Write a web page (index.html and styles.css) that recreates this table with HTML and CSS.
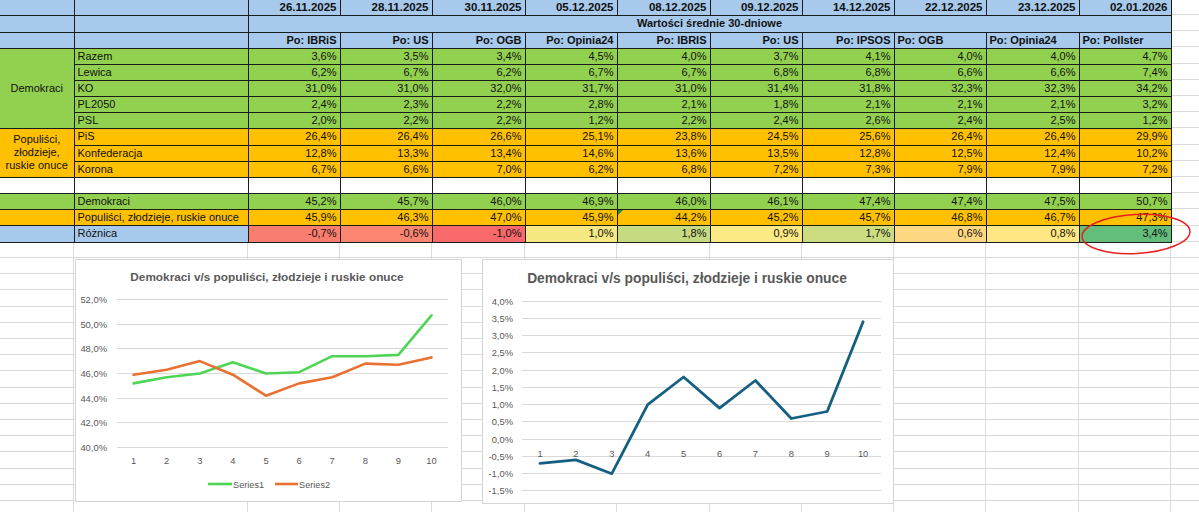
FILE: index.html
```html
<!DOCTYPE html>
<html lang="pl">
<head>
<meta charset="utf-8">
<title>Sondaże</title>
<link rel="stylesheet" href="styles.css">
</head>
<body>
<div class="sheet">
  <table class="poll">
    <colgroup>
      <col class="w-a"><col class="w-b">
      <col class="w92"><col class="w92"><col class="w93"><col class="w92"><col class="w93">
      <col class="w92"><col class="w92"><col class="w92"><col class="w93"><col class="w92">
    </colgroup>
    <tr class="h15">
      <td class="blue"></td><td class="blue"></td>
      <td class="blue date">26.11.2025</td><td class="blue date">28.11.2025</td><td class="blue date">30.11.2025</td>
      <td class="blue date">05.12.2025</td><td class="blue date">08.12.2025</td><td class="blue date">09.12.2025</td>
      <td class="blue date">14.12.2025</td><td class="blue date">22.12.2025</td><td class="blue date">23.12.2025</td>
      <td class="blue date">02.01.2026</td>
    </tr>
    <tr class="h17">
      <td class="blue"></td><td class="blue"></td>
      <td class="blue caption" colspan="10">Wartości średnie 30-dniowe</td>
    </tr>
    <tr class="h16">
      <td class="blue"></td><td class="blue"></td>
      <td class="blue src">Po: IBRiS</td><td class="blue src">Po: US</td><td class="blue src">Po: OGB</td>
      <td class="blue src">Po: Opinia24</td><td class="blue src">Po: IBRIS</td><td class="blue src">Po: US</td>
      <td class="blue src">Po: IPSOS</td><td class="blue src left">Po: OGB</td><td class="blue src left">Po: Opinia24</td>
      <td class="blue src left">Po: Pollster</td>
    </tr>
    <tr class="h16 green">
      <td class="group" rowspan="5">Demokraci</td><td class="name">Razem</td>
      <td class="num">3,6%</td><td class="num">3,5%</td><td class="num">3,4%</td><td class="num">4,5%</td><td class="num">4,0%</td>
      <td class="num">3,7%</td><td class="num">4,1%</td><td class="num">4,0%</td><td class="num">4,0%</td><td class="num">4,7%</td>
    </tr>
    <tr class="h16 green">
      <td class="name">Lewica</td>
      <td class="num">6,2%</td><td class="num">6,7%</td><td class="num">6,2%</td><td class="num">6,7%</td><td class="num">6,7%</td>
      <td class="num">6,8%</td><td class="num">6,8%</td><td class="num">6,6%</td><td class="num">6,6%</td><td class="num">7,4%</td>
    </tr>
    <tr class="h16 green">
      <td class="name">KO</td>
      <td class="num">31,0%</td><td class="num">31,0%</td><td class="num">32,0%</td><td class="num">31,7%</td><td class="num">31,0%</td>
      <td class="num">31,4%</td><td class="num">31,8%</td><td class="num">32,3%</td><td class="num">32,3%</td><td class="num">34,2%</td>
    </tr>
    <tr class="h16 green">
      <td class="name">PL2050</td>
      <td class="num">2,4%</td><td class="num">2,3%</td><td class="num">2,2%</td><td class="num">2,8%</td><td class="num">2,1%</td>
      <td class="num">1,8%</td><td class="num">2,1%</td><td class="num">2,1%</td><td class="num">2,1%</td><td class="num">3,2%</td>
    </tr>
    <tr class="h16 green">
      <td class="name">PSL</td>
      <td class="num">2,0%</td><td class="num">2,2%</td><td class="num">2,2%</td><td class="num">1,2%</td><td class="num">2,2%</td>
      <td class="num">2,4%</td><td class="num">2,6%</td><td class="num">2,4%</td><td class="num">2,5%</td><td class="num">1,2%</td>
    </tr>
    <tr class="h17 orange">
      <td class="group" rowspan="3">Populiści,<br>złodzieje,<br>ruskie onuce</td><td class="name">PiS</td>
      <td class="num">26,4%</td><td class="num">26,4%</td><td class="num">26,6%</td><td class="num">25,1%</td><td class="num">23,8%</td>
      <td class="num">24,5%</td><td class="num">25,6%</td><td class="num">26,4%</td><td class="num">26,4%</td><td class="num">29,9%</td>
    </tr>
    <tr class="h16 orange">
      <td class="name">Konfederacja</td>
      <td class="num">12,8%</td><td class="num">13,3%</td><td class="num">13,4%</td><td class="num">14,6%</td><td class="num">13,6%</td>
      <td class="num">13,5%</td><td class="num">12,8%</td><td class="num">12,5%</td><td class="num">12,4%</td><td class="num">10,2%</td>
    </tr>
    <tr class="h16 orange">
      <td class="name">Korona</td>
      <td class="num">6,7%</td><td class="num">6,6%</td><td class="num">7,0%</td><td class="num">6,2%</td><td class="num">6,8%</td>
      <td class="num">7,2%</td><td class="num">7,3%</td><td class="num">7,9%</td><td class="num">7,9%</td><td class="num">7,2%</td>
    </tr>
    <tr class="h16 blank">
      <td></td><td></td><td></td><td></td><td></td><td></td><td></td><td></td><td></td><td></td><td></td><td></td>
    </tr>
    <tr class="h16 green">
      <td></td><td class="name">Demokraci</td>
      <td class="num">45,2%</td><td class="num">45,7%</td><td class="num">46,0%</td><td class="num">46,9%</td><td class="num">46,0%</td>
      <td class="num">46,1%</td><td class="num">47,4%</td><td class="num">47,4%</td><td class="num">47,5%</td><td class="num">50,7%</td>
    </tr>
    <tr class="h16 orange">
      <td></td><td class="name">Populiści, złodzieje, ruskie onuce</td>
      <td class="num">45,9%</td><td class="num">46,3%</td><td class="num">47,0%</td><td class="num">45,9%</td><td class="num flag">44,2%</td>
      <td class="num">45,2%</td><td class="num">45,7%</td><td class="num">46,8%</td><td class="num">46,7%</td><td class="num">47,3%</td>
    </tr>
    <tr class="h17 diff">
      <td class="blue"></td><td class="blue name">Różnica</td>
      <td class="num" style="background:#f97e6f">-0,7%</td>
      <td class="num" style="background:#fa8570">-0,6%</td>
      <td class="num" style="background:#f8696b">-1,0%</td>
      <td class="num" style="background:#f6e883">1,0%</td>
      <td class="num" style="background:#c5da81">1,8%</td>
      <td class="num" style="background:#fcea84">0,9%</td>
      <td class="num" style="background:#cbdc81">1,7%</td>
      <td class="num" style="background:#fed981">0,6%</td>
      <td class="num" style="background:#ffe783">0,8%</td>
      <td class="num" style="background:#63be7b">3,4%</td>
    </tr>
  </table>

  <div class="charts">
    <div class="chart chart-one">
      <svg class="plot" viewBox="0 0 385 241" width="385" height="241">
        <text class="title title-sm" x="191" y="20.5">Demokraci v/s populiści, złodzieje i ruskie onuce</text>
        <g class="grid">
          <line x1="41" x2="372" y1="39.5" y2="39.5"/>
          <line x1="41" x2="372" y1="64.5" y2="64.5"/>
          <line x1="41" x2="372" y1="88.5" y2="88.5"/>
          <line x1="41" x2="372" y1="113.5" y2="113.5"/>
          <line x1="41" x2="372" y1="138.5" y2="138.5"/>
          <line x1="41" x2="372" y1="162.5" y2="162.5"/>
          <line x1="41" x2="372" y1="187.5" y2="187.5"/>
        </g>
        <g class="ylab">
          <text x="31" y="42.5">52,0%</text>
          <text x="31" y="67.5">50,0%</text>
          <text x="31" y="91.5">48,0%</text>
          <text x="31" y="116.5">46,0%</text>
          <text x="31" y="141.5">44,0%</text>
          <text x="31" y="165.5">42,0%</text>
          <text x="31" y="190.5">40,0%</text>
        </g>
        <g class="xlab">
          <text x="57.6" y="203.5">1</text>
          <text x="90.7" y="203.5">2</text>
          <text x="123.8" y="203.5">3</text>
          <text x="156.9" y="203.5">4</text>
          <text x="190" y="203.5">5</text>
          <text x="223.1" y="203.5">6</text>
          <text x="256.2" y="203.5">7</text>
          <text x="289.3" y="203.5">8</text>
          <text x="322.4" y="203.5">9</text>
          <text x="355.5" y="203.5">10</text>
        </g>
        <polyline class="s1" points="57.6,123.4 90.7,117.2 123.8,113.5 156.9,102.3 190,113.5 223.1,112.2 256.2,96.2 289.3,96.2 322.4,94.9 355.5,55.3"/>
        <polyline class="s2" points="57.6,114.7 90.7,109.8 123.8,101.1 156.9,114.7 190,135.7 223.1,123.4 256.2,117.2 289.3,103.6 322.4,104.8 355.5,97.4"/>
        <line class="s1" x1="132" x2="156" y1="224" y2="224"/>
        <text class="legend" x="157" y="227.5">Series1</text>
        <line class="s2" x1="199" x2="222" y1="224" y2="224"/>
        <text class="legend" x="223" y="227.5">Series2</text>
      </svg>
    </div>
    <div class="chart chart-two">
      <svg class="plot" viewBox="0 0 410 243" width="410" height="243">
        <text class="title title-lg" x="204" y="23">Demokraci v/s populiści, złodzieje i ruskie onuce</text>
        <g class="grid">
          <line x1="39" x2="398" y1="41.5" y2="41.5"/>
          <line x1="39" x2="398" y1="58.5" y2="58.5"/>
          <line x1="39" x2="398" y1="75.5" y2="75.5"/>
          <line x1="39" x2="398" y1="92.5" y2="92.5"/>
          <line x1="39" x2="398" y1="110.5" y2="110.5"/>
          <line x1="39" x2="398" y1="127.5" y2="127.5"/>
          <line x1="39" x2="398" y1="144.5" y2="144.5"/>
          <line x1="39" x2="398" y1="161.5" y2="161.5"/>
          <line x1="39" x2="398" y1="179.5" y2="179.5"/>
          <line x1="39" x2="398" y1="196.5" y2="196.5"/>
          <line x1="39" x2="398" y1="213.5" y2="213.5"/>
          <line x1="39" x2="398" y1="230.5" y2="230.5"/>
        </g>
        <g class="ylab">
          <text x="30" y="44.5">4,0%</text>
          <text x="30" y="61.5">3,5%</text>
          <text x="30" y="78.5">3,0%</text>
          <text x="30" y="95.5">2,5%</text>
          <text x="30" y="113.5">2,0%</text>
          <text x="30" y="130.5">1,5%</text>
          <text x="30" y="147.5">1,0%</text>
          <text x="30" y="164.5">0,5%</text>
          <text x="30" y="182.5">0,0%</text>
          <text x="30" y="199.5">-0,5%</text>
          <text x="30" y="216.5">-1,0%</text>
          <text x="30" y="233.5">-1,5%</text>
        </g>
        <g class="xlab">
          <text x="57" y="197">1</text>
          <text x="92.9" y="197">2</text>
          <text x="128.8" y="197">3</text>
          <text x="164.7" y="197">4</text>
          <text x="200.6" y="197">5</text>
          <text x="236.5" y="197">6</text>
          <text x="272.4" y="197">7</text>
          <text x="308.3" y="197">8</text>
          <text x="344.2" y="197">9</text>
          <text x="380.1" y="197">10</text>
        </g>
        <polyline class="s3" points="57,203.4 92.9,199.9 128.8,213.7 164.7,144.6 200.6,117 236.5,148.1 272.4,120.5 308.3,158.5 344.2,151.5 380.1,61.7"/>
      </svg>
    </div>
  </div>

  <svg class="mark" viewBox="0 0 118 48" width="118" height="48">
    <ellipse cx="59" cy="24" rx="54" ry="19.5" transform="rotate(-3 59 24)"/>
  </svg>
</div>
</body>
</html>
```
FILE: styles.css
```css
* { box-sizing: border-box; }

html, body {
  margin: 0;
  padding: 0;
  background: #ffffff;
}

.sheet {
  position: relative;
  width: 1199px;
  height: 512px;
  overflow: hidden;
  font-family: "Liberation Sans", Arial, sans-serif;
  background:
    linear-gradient(#dadada, #dadada) 73px 0 / 1px 100% no-repeat,
    linear-gradient(#dadada, #dadada) 247px 0 / 1px 100% no-repeat,
    linear-gradient(#dadada, #dadada) 339px 0 / 1px 100% no-repeat,
    linear-gradient(#dadada, #dadada) 431px 0 / 1px 100% no-repeat,
    linear-gradient(#dadada, #dadada) 524px 0 / 1px 100% no-repeat,
    linear-gradient(#dadada, #dadada) 616px 0 / 1px 100% no-repeat,
    linear-gradient(#dadada, #dadada) 709px 0 / 1px 100% no-repeat,
    linear-gradient(#dadada, #dadada) 801px 0 / 1px 100% no-repeat,
    linear-gradient(#dadada, #dadada) 893px 0 / 1px 100% no-repeat,
    linear-gradient(#dadada, #dadada) 985px 0 / 1px 100% no-repeat,
    linear-gradient(#dadada, #dadada) 1078px 0 / 1px 100% no-repeat,
    linear-gradient(#dadada, #dadada) 1170px 0 / 1px 100% no-repeat,
    repeating-linear-gradient(to bottom, #dadada 0 1px, transparent 1px 16.2px) 0 14px / 100% 100% no-repeat,
    #ffffff;
}

/* ---------- table ---------- */
.poll {
  table-layout: fixed;
  width: 1171px;
  border-collapse: collapse;
  font-size: 11px;
  color: #111111;
}

.w-a { width: 74px; }
.w-b { width: 174px; }
.w92 { width: 92px; }
.w93 { width: 93px; }

.poll td {
  border: 1px solid #1c1c1c;
  padding: 0 3px;
  white-space: nowrap;
  overflow: hidden;
  line-height: 13px;
  vertical-align: middle;
}

.poll tr:first-child td { border-top: 0; }
.poll tr td:first-child { border-left: 0; }

.h15 td { height: 15px; }
.h16 td { height: 16px; }
.h17 td { height: 17px; }

.blue { background: #a6c9ec; }
.green td { background: #92d050; }
.orange td { background: #ffc000; }
.blank td { background: #ffffff; }
.diff .blue { background: #a6c9ec; }

.date {
  text-align: right;
  font-weight: bold;
  font-size: 11.5px;
}

.caption {
  text-align: center;
  font-weight: bold;
}

.src {
  text-align: right;
  font-weight: bold;
}

.src.left { text-align: left; }

.name { text-align: left; }

.num {
  text-align: right;
  padding-right: 2px;
}

.group {
  text-align: center;
  line-height: 16px;
  padding: 0;
}

.flag { position: relative; }
.flag::before {
  content: "";
  position: absolute;
  top: 0;
  left: 0;
  border-top: 5px solid #1f8a3a;
  border-right: 5px solid transparent;
}

/* ---------- charts ---------- */
.charts {
  display: flex;
  align-items: flex-start;
  gap: 20px;
  margin-top: 16px;
  padding-left: 75px;
}

.chart {
  background: #ffffff;
  border: 1px solid #d4d4d4;
}

.chart-one { width: 387px; height: 243px; }
.chart-two { width: 412px; height: 245px; }

.plot { display: block; }

.plot text {
  font-family: "Liberation Sans", Arial, sans-serif;
  fill: #595959;
}

.title {
  font-weight: bold;
  text-anchor: middle;
}
.title-sm { font-size: 11.8px; }
.title-lg { font-size: 13.8px; }

.grid line {
  stroke: #d9d9d9;
  stroke-width: 1;
}

.ylab text {
  font-size: 9.4px;
  text-anchor: end;
}

.xlab text {
  font-size: 9.4px;
  text-anchor: middle;
}

.legend { font-size: 9.2px; }

.s1, .s2, .s3 {
  fill: none;
  stroke-width: 2.6;
  stroke-linejoin: round;
  stroke-linecap: round;
}
.s1 { stroke: #4ed553; }
.s2 { stroke: #e97132; }
.s3 { stroke: #156082; stroke-width: 2.8; }

line.s1, line.s2 { stroke-linecap: butt; }

/* ---------- annotation ---------- */
.mark {
  position: absolute;
  left: 1077px;
  top: 210px;
  overflow: visible;
}

.mark ellipse {
  fill: none;
  stroke: #e6201e;
  stroke-width: 1.5;
}
```
